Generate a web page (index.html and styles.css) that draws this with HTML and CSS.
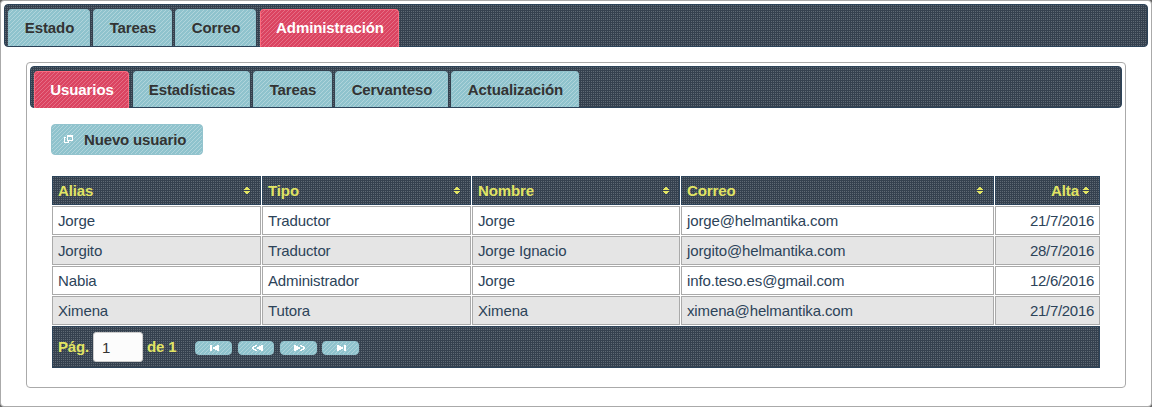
FILE: index.html
```html
<!DOCTYPE html>
<html lang="es">
<head>
<meta charset="utf-8">
<title>Administración</title>
<link rel="stylesheet" href="styles.css">
</head>
<body>
<div class="window">
  <nav class="bar">
    <a class="tab w82">Estado</a><a class="tab w79">Tareas</a><a class="tab w81">Correo</a><a class="tab active w139">Administración</a>
  </nav>
  <main class="panel">
    <nav class="bar inner">
      <a class="tab active w95">Usuarios</a><a class="tab w117">Estadísticas</a><a class="tab w79">Tareas</a><a class="tab w113">Cervanteso</a><a class="tab w128">Actualización</a>
    </nav>
    <section class="content">
      <button class="new"><svg width="10" height="8" viewBox="0 0 10 8" shape-rendering="crispEdges"><path fill="#fff" fill-rule="evenodd" d="M3 0h6v6H3zM4 2v3h4V2zM0 2h2v1H1v4h3V6h1v2H0z"/></svg>Nuevo usuario</button>
      <div class="grid">
        <div class="th">Alias<svg class="sort" viewBox="0 0 6 7"><path d="M2 0h2v1h1v1h1v1H0V2h1V1h1zM0 4h6v1H5v1H4v1H2V6H1V5H0z"/></svg></div>
        <div class="th">Tipo<svg class="sort" viewBox="0 0 6 7"><path d="M2 0h2v1h1v1h1v1H0V2h1V1h1zM0 4h6v1H5v1H4v1H2V6H1V5H0z"/></svg></div>
        <div class="th">Nombre<svg class="sort" viewBox="0 0 6 7"><path d="M2 0h2v1h1v1h1v1H0V2h1V1h1zM0 4h6v1H5v1H4v1H2V6H1V5H0z"/></svg></div>
        <div class="th">Correo<svg class="sort" viewBox="0 0 6 7"><path d="M2 0h2v1h1v1h1v1H0V2h1V1h1zM0 4h6v1H5v1H4v1H2V6H1V5H0z"/></svg></div>
        <div class="th end">Alta<svg class="sort" viewBox="0 0 6 7"><path d="M2 0h2v1h1v1h1v1H0V2h1V1h1zM0 4h6v1H5v1H4v1H2V6H1V5H0z"/></svg></div>
        <div class="td">Jorge</div><div class="td">Traductor</div><div class="td">Jorge</div><div class="td">jorge@helmantika.com</div><div class="td end">21/7/2016</div>
        <div class="td alt">Jorgito</div><div class="td alt">Traductor</div><div class="td alt">Jorge Ignacio</div><div class="td alt">jorgito@helmantika.com</div><div class="td alt end">28/7/2016</div>
        <div class="td">Nabia</div><div class="td">Administrador</div><div class="td">Jorge</div><div class="td">info.teso.es@gmail.com</div><div class="td end">12/6/2016</div>
        <div class="td alt">Ximena</div><div class="td alt">Tutora</div><div class="td alt">Ximena</div><div class="td alt">ximena@helmantika.com</div><div class="td alt end">21/7/2016</div>
      </div>
      <footer class="pager">
        <span class="label">Pág.</span><input class="page" value="1"><span class="total">de 1</span>
        <div class="buttons">
          <button class="nav w37"><svg width="9" height="6" viewBox="0 0 9 6"><path d="M0 0h2v6H0zM9 0v6H7V5H5V4H3V2h2V1h2V0z"/></svg></button>
          <button class="nav w36"><svg width="11" height="6" viewBox="0 0 11 6"><path d="M11 0v6H9V5H7V4H5V2h2V1h2V0zM3 0h2v1H4v1H2v2h2v1h1v1H3V5H1V4H0V2h1V1h2z"/></svg></button>
          <button class="nav w37"><svg width="11" height="6" viewBox="0 0 11 6"><path d="M0 0v6h2V5h2V4h2V2H4V1H2V0zM8 0H6v1h1v1h2v2H7v1H6v1h2V5h2V4h1V2h-1V1H8z"/></svg></button>
          <button class="nav last w37"><svg width="9" height="6" viewBox="0 0 9 6"><path d="M7 0h2v6H7zM0 0v6h2V5h2V4h2V2H4V1H2V0z"/></svg></button>
        </div>
      </footer>
    </section>
  </main>
</div>
</body>
</html>
```
FILE: styles.css
```css
* { box-sizing: border-box; }
body {
  margin: 0;
  background: #666;
  color: #2c4359;
  font: 15px/20px "Liberation Sans", Arial, sans-serif;
}
button, input { font: inherit; }
.window {
  height: 407px;
  padding: 3px;
  background: #fff;
  border: 1px solid #aaa;
  border-radius: 4px;
}
.bar, .th, .pager {
  border: 1px solid #2c4359;
  background: #35414f url("data:image/svg+xml,%3Csvg xmlns='http://www.w3.org/2000/svg' width='2' height='2'%3E%3Crect width='1' height='1' fill='%235e6974'/%3E%3C/svg%3E");
}
.bar {
  display: flex;
  gap: 3px;
  height: 43px;
  padding: 4px 3px 0;
  border-radius: 4px;
}
.bar.inner { height: 42px; }
.tab {
  height: 37px;
  border: 1px solid #93c3cd;
  border-bottom: 0;
  border-radius: 4px 4px 0 0;
  color: #333;
  font-weight: bold;
  line-height: 36px;
  text-align: center;
  letter-spacing: -0.1px;
  text-indent: 1px;
}
.inner .tab { height: 36px; }
.tab, .new, .nav {
  background: #8fc3cd url("data:image/svg+xml,%3Csvg xmlns='http://www.w3.org/2000/svg' width='4' height='4' shape-rendering='crispEdges'%3E%3Cpath fill='%23b0d4db' d='M3 0h1v1H3zM2 1h1v1H2zM1 2h1v1H1zM0 3h1v1H0z'/%3E%3C/svg%3E");
}
.tab.active {
  height: 38px;
  border-color: #ff6b7f;
  color: #fff;
  background: #db4461 url("data:image/svg+xml,%3Csvg xmlns='http://www.w3.org/2000/svg' width='4' height='4' shape-rendering='crispEdges'%3E%3Cpath fill='%23e46f86' d='M3 0h1v1H3zM2 1h1v1H2zM1 2h1v1H1zM0 3h1v1H0z'/%3E%3C/svg%3E");
}
.inner .tab.active { height: 37px; }
.w36 { width: 36px; }
.w37 { width: 37px; }
.w79 { width: 79px; }
.w81 { width: 81px; margin-right: 1px; }
.w82 { width: 82px; }
.w95 { width: 95px; margin-right: 1px; }
.w113 { width: 113px; }
.w117 { width: 117px; }
.w128 { width: 128px; }
.w139 { width: 139px; }
.panel {
  height: 326px;
  margin: 15px 22px 0;
  padding: 3px;
  border: 1px solid #aaa;
  border-radius: 4px;
}
.content { padding: 16px 22px 0; }
.new {
  display: flex;
  align-items: center;
  width: 152px;
  height: 31px;
  margin-left: -1px;
  padding: 0 0 0 12px;
  border: 1px solid #93c3cd;
  border-radius: 4px;
  color: #333;
  font-weight: bold;
  letter-spacing: -0.15px;
}
.new svg { margin: -1px 10px 0 0; }
.grid {
  display: grid;
  grid-template-columns: 209px 209px 208px 313px 105px;
  grid-auto-rows: 29px;
  gap: 1px;
  margin-top: 21px;
}
.th, .td {
  display: flex;
  align-items: center;
  padding: 0 5px;
}
.th {
  justify-content: space-between;
  padding-right: 10px;
  color: #e1e463;
  font-weight: bold;
  letter-spacing: -0.1px;
}
.td { border: 1px solid #aaa; letter-spacing: -0.13px; }
.alt { background: #e5e5e5; }
.end { justify-content: flex-end; }
.td.end { letter-spacing: -0.3px; }
.sort {
  width: 6px;
  height: 7px;
  fill: #e1e463;
  shape-rendering: crispEdges;
}
.th.end .sort { margin-left: 4px; }
.pager {
  display: flex;
  align-items: center;
  height: 42px;
  margin-top: 1px;
  padding-left: 5px;
  color: #e1e463;
  font-weight: bold;
}
.label { width: 31px; letter-spacing: -0.2px; }
.total { width: 29px; letter-spacing: -0.15px; white-space: nowrap; }
.page {
  width: 50px;
  height: 30px;
  margin: 0 4px;
  padding: 0 8px;
  border: 1px solid #ccc;
  border-radius: 3px;
  background: #fcfcfc;
  color: #333;
  font-weight: normal;
}
.buttons {
  display: flex;
  gap: 6px;
  margin: 2px 0 0 19px;
}
.nav {
  display: flex;
  align-items: center;
  justify-content: center;
  height: 14px;
  padding: 0;
  border: 1px solid #93c3cd;
  border-radius: 4px;
}
.nav.last { margin-left: -1px; }
.nav svg { margin-left: 2px; fill: #fff; shape-rendering: crispEdges; }
```
